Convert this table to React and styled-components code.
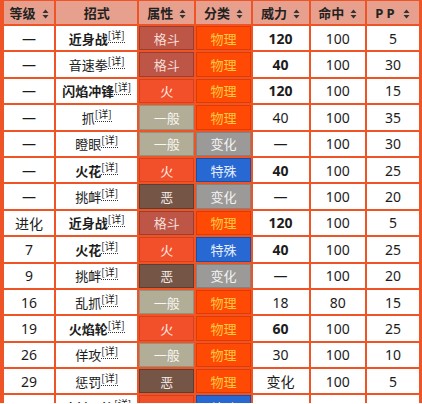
import React from "react"
import styled, { createGlobalStyle } from "styled-components"

const GlobalStyle = createGlobalStyle`
    html, body {
        margin: 0;
        padding: 0;
        background: #ffffff;
    }
    body {
        font-family: "Noto Sans", "Noto Sans CJK SC", sans-serif;
        color: #222;
    }
`

const types = {
    格斗: { bg: "#BD5646", border: "#9A3E30", color: "#F6DDD6" },
    火: { bg: "#F2502A", border: "#D8401C", color: "#FFF3EC" },
    一般: { bg: "#B2AD97", border: "#97927C", color: "#F7F6F0" },
    恶: { bg: "#745546", border: "#5A3E31", color: "#F3ECE8" },
}

const cats = {
    物理: { bg: "#FF4A05", border: "#E03A00", color: "#FFC840" },
    特殊: { bg: "#2868D2", border: "#1A4FA8", color: "#E4EEFF" },
    变化: { bg: "#9C9A98", border: "#85837F", color: "#F4F4F4" },
}

// 等级, 招式, 招式加粗, 属性, 分类, 威力, 威力加粗, 命中, PP
const moves = [
    ["—", "近身战", true, "格斗", "物理", "120", true, "100", "5"],
    ["—", "音速拳", false, "格斗", "物理", "40", true, "100", "30"],
    ["—", "闪焰冲锋", true, "火", "物理", "120", true, "100", "15"],
    ["—", "抓", false, "一般", "物理", "40", false, "100", "35"],
    ["—", "瞪眼", false, "一般", "变化", "—", false, "100", "30"],
    ["—", "火花", true, "火", "特殊", "40", true, "100", "25"],
    ["—", "挑衅", false, "恶", "变化", "—", false, "100", "20"],
    ["进化", "近身战", true, "格斗", "物理", "120", true, "100", "5"],
    ["7", "火花", true, "火", "特殊", "40", true, "100", "25"],
    ["9", "挑衅", false, "恶", "变化", "—", false, "100", "20"],
    ["16", "乱抓", false, "一般", "物理", "18", false, "80", "15"],
    ["19", "火焰轮", true, "火", "物理", "60", true, "100", "25"],
    ["26", "佯攻", false, "一般", "物理", "30", false, "100", "10"],
    ["29", "惩罚", false, "恶", "物理", "变化", false, "100", "5"],
    ["33", "喷射火焰", true, "火", "特殊", "90", true, "100", "15"],
]

function SortIcon() {
    return (
        <Sort viewBox="0 0 7 10" width="7" height="10">
            <path d="M3.5 0.5 L6.5 4 L0.5 4 Z" fill="#333" />
            <path d="M3.5 9.5 L6.5 6 L0.5 6 Z" fill="#333" />
        </Sort>
    )
}

export default function App() {
    return (
        <>
            <GlobalStyle />
            <Frame>
                <Table>
                    <colgroup>
                        <col style={{ width: 50 }} />
                        <col style={{ width: 81 }} />
                        <col style={{ width: 55 }} />
                        <col style={{ width: 54 }} />
                        <col style={{ width: 56 }} />
                        <col style={{ width: 54 }} />
                        <col style={{ width: 52 }} />
                    </colgroup>
                    <thead>
                        <tr>
                            <HeadCell>等级<SortIcon /></HeadCell>
                            <HeadCell>招式</HeadCell>
                            <HeadCell>属性<SortIcon /></HeadCell>
                            <HeadCell>分类<SortIcon /></HeadCell>
                            <HeadCell>威力<SortIcon /></HeadCell>
                            <HeadCell>命中<SortIcon /></HeadCell>
                            <HeadCell><Spaced>PP</Spaced><SortIcon /></HeadCell>
                        </tr>
                    </thead>
                    <tbody>
                        {moves.map((m, i) => (
                            <tr key={i}>
                                <Cell>{m[0]}</Cell>
                                <Cell>
                                    <MoveName bold={m[2]}>{m[1]}</MoveName>
                                    <Detail>[详]</Detail>
                                </Cell>
                                <TypeCell kind={m[3]}>{m[3]}</TypeCell>
                                <CatCell kind={m[4]}>{m[4]}</CatCell>
                                <Cell bold={m[6]}>{m[5]}</Cell>
                                <Cell>{m[7]}</Cell>
                                <Cell>{m[8]}</Cell>
                            </tr>
                        ))}
                    </tbody>
                </Table>
            </Frame>
        </>
    )
}

const Frame = styled.div`
    width: 422px;
    height: 404px;
    overflow: hidden;
    background: #EE5426;
    padding-left: 2px;
    margin-top: -1px;
    box-sizing: border-box;
`
const Table = styled.table`
    table-layout: fixed;
    border-collapse: separate;
    border-spacing: 2px;
    width: 419px;
`
const HeadCell = styled.th`
    height: 23px;
    padding: 0;
    background: #E6A08D;
    color: #222;
    font-family: "Noto Sans CJK SC", "Noto Sans", sans-serif;
    font-size: 13px;
    font-weight: 700;
    text-align: center;
    white-space: nowrap;
    vertical-align: middle;
`
const Spaced = styled.span`
    font-family: "Noto Sans", sans-serif;
    letter-spacing: 3px;
`
const Sort = styled.svg`
    margin-left: 6px;
    vertical-align: -1px;
`
const Cell = styled.td`
    height: 24.4px;
    padding: 0;
    background: #ffffff;
    text-align: center;
    vertical-align: middle;
    font-family: "Noto Sans", "Noto Sans CJK SC", sans-serif;
    font-size: 14px;
    font-weight: ${p => (p.bold ? 700 : 400)};
    color: #1c1c1c;
    white-space: nowrap;
`
const MoveName = styled.span`
    font-family: "Noto Sans CJK SC", sans-serif;
    font-size: 13px;
    font-weight: ${p => (p.bold ? 700 : 400)};
`
const Detail = styled.sup`
    font-family: "Noto Sans CJK SC", sans-serif;
    font-size: 10px;
    font-weight: 400;
    border-bottom: 1px dotted #333;
    line-height: 1;
    vertical-align: 5px;
`
const TypeCell = styled.td`
    padding: 0;
    box-sizing: border-box;
    background: ${p => types[p.kind].bg};
    border: 1px solid ${p => types[p.kind].border};
    color: ${p => types[p.kind].color};
    font-family: "Noto Sans CJK SC", sans-serif;
    font-size: 13px;
    text-align: center;
    vertical-align: middle;
`
const CatCell = styled.td`
    padding: 0;
    box-sizing: border-box;
    background: ${p => cats[p.kind].bg};
    border: 1px solid ${p => cats[p.kind].border};
    color: ${p => cats[p.kind].color};
    font-family: "Noto Sans CJK SC", sans-serif;
    font-size: 13px;
    text-align: center;
    vertical-align: middle;
`
